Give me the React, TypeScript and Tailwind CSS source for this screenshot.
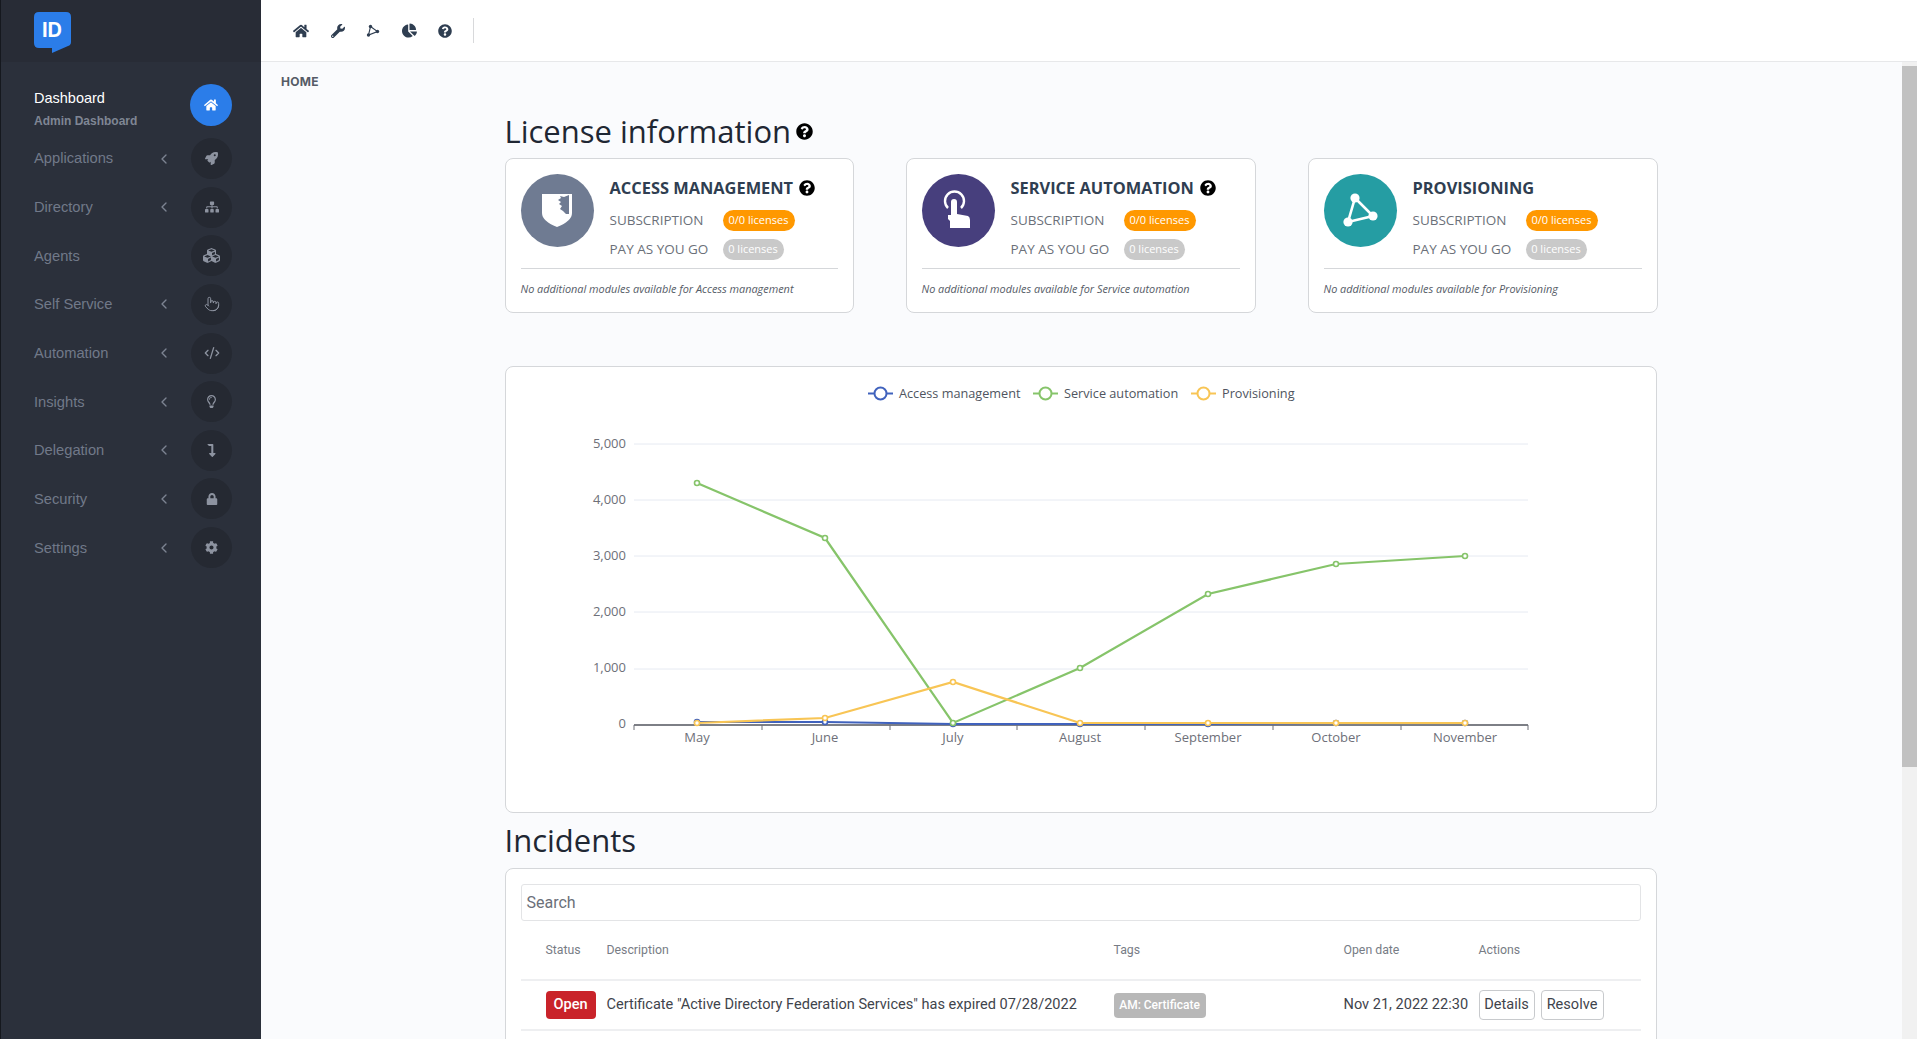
import React from "react";
import {
  FaHome, FaRocket, FaSitemap, FaCubes, FaRegLightbulb,
  FaLevelDownAlt, FaLock, FaCog, FaWrench, FaChartPie, FaQuestionCircle,
} from "react-icons/fa";
import { ChevronLeft, CodeXml, Pointer } from "lucide-react";

const nav: { label: string; icon: React.ReactNode; chevron: boolean }[] = [
  { label: "Applications", icon: <FaRocket className="text-[13px]" />, chevron: true },
  { label: "Directory", icon: <FaSitemap />, chevron: true },
  { label: "Agents", icon: <FaCubes className="text-[17px]" />, chevron: false },
  { label: "Self Service", icon: <Pointer size={16} strokeWidth={1.5} />, chevron: true },
  { label: "Automation", icon: <CodeXml size={16} strokeWidth={2} />, chevron: true },
  { label: "Insights", icon: <FaRegLightbulb className="text-[13px]" />, chevron: true },
  { label: "Delegation", icon: <FaLevelDownAlt className="text-[13px]" />, chevron: true },
  { label: "Security", icon: <FaLock className="text-[12px]" />, chevron: true },
  { label: "Settings", icon: <FaCog className="text-[13px]" />, chevron: true },
];

function ToolbarTriangle() {
  return (
    <svg width="14" height="14" viewBox="0 0 14 14" fill="none">
      <path d="M4.5 2.5 L11.5 7.5 L2.5 11 Z" stroke="#2f3e51" strokeWidth="1.1" />
      <circle cx="4.5" cy="2.5" r="1.7" fill="#2f3e51" />
      <circle cx="11.5" cy="7.5" r="1.7" fill="#2f3e51" />
      <circle cx="2.5" cy="11" r="1.7" fill="#2f3e51" />
    </svg>
  );
}

function ProvisioningIcon() {
  return (
    <svg width="73" height="73" viewBox="0 0 73 73" fill="none">
      <path d="M31 24 L49 42 L24 48 Z" stroke="#fff" strokeWidth="2.6" />
      <circle cx="31" cy="24" r="4.6" fill="#fff" />
      <circle cx="49" cy="42" r="4.6" fill="#fff" />
      <circle cx="24" cy="48" r="4.6" fill="#fff" />
    </svg>
  );
}

function ShieldIcon() {
  return (
    <svg width="73" height="73" viewBox="0 0 73 73">
      <path d="M21 20 H51 V39 Q51 47 36 53 Q21 47 21 39 Z" fill="#fff" />
      <path
        d="M48 21 V40 L45 40 L42 37 L39 35 L41 32 L38 30 L40 28 L37 26 L40 24 L39 22 L43 23 Z"
        fill="#6f7b92"
      />
    </svg>
  );
}

function TapIcon() {
  return (
    <svg width="73" height="73" viewBox="0 0 73 73" fill="none">
      <path d="M26 34 A9.5 9.5 0 1 1 39 34" stroke="#fff" strokeWidth="2.4" />
      <path
        d="M29 28 Q29 25 32 25 Q35 25 35 28 V40 L46 42 Q48 43 48 46 V54 H28 V47 L26 45 V41 L29 41 Z"
        fill="#fff"
      />
    </svg>
  );
}

function LicenseCard({
  title, help, circle, icon,
}: { title: string; help: boolean; circle: string; icon: React.ReactNode }) {
  return (
    <div className="bg-white border border-[#d5d7da] rounded-[8px] h-[155px] px-[15px] pt-[15px]">
      <div className="flex h-[94px]">
        <div className={`w-[73px] h-[73px] rounded-full shrink-0 flex items-center justify-center ${circle}`}>
          {icon}
        </div>
        <div className="ml-[16px] flex-1 pt-[1px]">
          <div className="flex items-center h-[26px] text-[16.4px] font-bold text-[#2f3e51] leading-none">
            {title}
            {help && <FaQuestionCircle className="ml-[6px] text-[16px] text-black" />}
          </div>
          <div className="flex items-center mt-[8px] h-[22px]">
            <span className="w-[113px] text-[13.5px] text-[#6b7079]">SUBSCRIPTION</span>
            <span className="bg-[#ff9800] text-white text-[11px] rounded-full h-[21px] w-[72px] flex items-center justify-center">
              0/0 licenses
            </span>
          </div>
          <div className="flex items-center mt-[7px] h-[22px]">
            <span className="w-[113px] text-[13.5px] text-[#6b7079]">PAY AS YOU GO</span>
            <span className="bg-[#c9c9c9] text-white text-[11px] rounded-full h-[21px] w-[61px] flex items-center justify-center">
              0 licenses
            </span>
          </div>
        </div>
      </div>
      <div className="border-t border-[#d5d7da] pt-[12px] text-[10.9px] italic text-[#555b66] leading-[16px]">
        No additional modules available for {title === "ACCESS MANAGEMENT" ? "Access management" : title === "SERVICE AUTOMATION" ? "Service automation" : "Provisioning"}
      </div>
    </div>
  );
}

const xs = [697, 825, 953, 1080, 1208, 1336, 1465];
const months = ["May", "June", "July", "August", "September", "October", "November"];
const green = [483, 538, 723, 668, 594, 564, 556];
const yellow = [723, 718, 682, 723, 723, 723, 723];
const blue = [722, 722, 724, 724, 724, 723, 723];
const pts = (ys: number[]) => ys.map((y, i) => `${xs[i]},${y}`).join(" ");

function Series({ ys, color }: { ys: number[]; color: string }) {
  return (
    <g>
      <polyline points={pts(ys)} fill="none" stroke={color} strokeWidth="2.2" />
      {ys.map((y, i) => (
        <circle key={i} cx={xs[i]} cy={y} r="2.5" fill="#fff" stroke={color} strokeWidth="1.6" />
      ))}
    </g>
  );
}

function Legend({ x, color, label }: { x: number; color: string; label: string }) {
  return (
    <g>
      <line x1={x} x2={x + 25} y1="393.5" y2="393.5" stroke={color} strokeWidth="2" />
      <circle cx={x + 12.5} cy="393.5" r="6" fill="#fff" stroke={color} strokeWidth="2" />
      <text x={x + 31} y="398" fontSize="12.7" fill="#4f5560">{label}</text>
    </g>
  );
}

function Chart() {
  const lines = [444, 500, 556, 612, 669];
  const labels = ["5,000", "4,000", "3,000", "2,000", "1,000", "0"];
  const ticks = [634, 762, 890, 1017, 1145, 1273, 1401, 1528];
  return (
    <svg width="1150" height="445" viewBox="506 367 1150 445" className="block font-['Open_Sans',sans-serif]">
      <Legend x={868} color="#4062bd" label="Access management" />
      <Legend x={1033} color="#86c46a" label="Service automation" />
      <Legend x={1191} color="#f8c555" label="Provisioning" />
      {lines.map((y) => (
        <line key={y} x1="634" x2="1528" y1={y} y2={y} stroke="#e6eaf2" strokeWidth="1" />
      ))}
      {labels.map((t, i) => (
        <text key={t} x="626" y={[448, 504, 560, 616, 672, 728][i]} textAnchor="end" fontSize="13" fill="#6e7079">{t}</text>
      ))}
      <line x1="634" x2="1528" y1="725" y2="725" stroke="#7d7f86" strokeWidth="1.8" />
      {ticks.map((x) => (
        <line key={x} x1={x} x2={x} y1="725" y2="730" stroke="#6e7079" strokeWidth="1" />
      ))}
      {months.map((m, i) => (
        <text key={m} x={xs[i]} y="742" textAnchor="middle" fontSize="13" fill="#6e7079">{m}</text>
      ))}
      <Series ys={blue} color="#4062bd" />
      <Series ys={green} color="#86c46a" />
      <Series ys={yellow} color="#f8c555" />
    </svg>
  );
}

export default function App() {
  return (
    <div className="flex h-screen w-full overflow-hidden bg-[#fafbfd] font-['Open_Sans',sans-serif]">
      <aside className="w-[261px] shrink-0 bg-[#2b303b] border-l border-[#15181e] font-['Liberation_Sans',sans-serif]">
        <div className="h-[62px] bg-[#282c36] pl-[33px] pt-[12px]">
          <svg width="37" height="42" viewBox="0 0 37 42">
            <path d="M5 0 H32 Q37 0 37 5 V30 Q37 33 34 34 L18 41 V36 H5 Q0 36 0 31 V5 Q0 0 5 0 Z" fill="#2b7de9" />
            <text x="18" y="25" textAnchor="middle" fontSize="20" fontWeight="700" fill="#fff" fontFamily="Inter, sans-serif">ID</text>
          </svg>
        </div>
        <div className="pt-[22px]">
          <div className="flex items-center h-[42px] pl-[33px] pr-[29px] justify-between">
            <div className="mt-[7px]">
              <div className="text-[14.5px] text-white leading-[20px]">Dashboard</div>
              <div className="text-[12px] font-bold text-[#7f8694] leading-[15px] mt-[6.5px]">Admin Dashboard</div>
            </div>
            <div className="w-[42px] h-[42px] rounded-full bg-[#2b7de9] flex items-center justify-center text-white text-[14px]">
              <FaHome />
            </div>
          </div>
          <div className="mt-[12px] flex flex-col gap-[7.65px]">
            {nav.map((n) => (
              <div key={n.label} className="flex items-center h-[41px] pl-[33px] pr-[29px] text-[14.7px] text-[#717989]">
                <span className="flex-1">{n.label}</span>
                {n.chevron && <ChevronLeft size={16} strokeWidth={2} className="text-[#7d8492] mr-[19px]" />}
                <div className="w-[41px] h-[41px] rounded-full bg-[#252932] flex items-center justify-center text-[#8d93a0] text-[14px]">
                  {n.icon}
                </div>
              </div>
            ))}
          </div>
        </div>
      </aside>
      <div className="flex-1 flex flex-col min-w-0">
        <header className="h-[62px] shrink-0 bg-white border-b border-[#e7e8ea] flex items-center pl-[32px] text-[#2f3e51] text-[15px]">
          <FaHome className="text-[16px]" />
          <FaWrench className="ml-[22px] text-[14px]" />
          <span className="ml-[21px]"><ToolbarTriangle /></span>
          <FaChartPie className="ml-[22px]" />
          <FaQuestionCircle className="ml-[21px] text-[14px]" />
          <div className="ml-[21px] w-px h-[25px] bg-[#d8d9db]" />
        </header>
        <div className="flex-1 flex min-h-0">
          <main className="flex-1 overflow-hidden min-w-0 pr-[2px]">
            <div className="pl-[20px] pt-[13px] text-[12px] font-bold text-[#555b66] leading-[14px] tracking-[0.25px] font-['Inter',sans-serif]">HOME</div>
            <div className="w-[1152px] mx-auto">
              <div className="flex items-center h-[44px] mt-[20px]">
                <h1 className="text-[31px] leading-none text-[#1f2733]">License information</h1>
                <FaQuestionCircle className="ml-[5px] mt-[1px] text-[17px] text-black" />
              </div>
              <div className="grid grid-cols-[349px_350px_350px] gap-x-[52px] mt-[5px]">
                <LicenseCard title="ACCESS MANAGEMENT" help circle="bg-[#6f7b92]" icon={<ShieldIcon />} />
                <LicenseCard title="SERVICE AUTOMATION" help circle="bg-[#473f7d]" icon={<TapIcon />} />
                <LicenseCard title="PROVISIONING" help={false} circle="bg-[#259da3]" icon={<ProvisioningIcon />} />
              </div>
              <div className="mt-[53px] h-[447px] bg-white border border-[#d5d7da] rounded-[8px]">
                <Chart />
              </div>
              <h2 className="text-[31px] leading-[44px] mt-[5px] text-[#1f2733]">Incidents</h2>
              <div className="mt-[6px] bg-white border border-[#d5d7da] rounded-[8px] px-[15px] pt-[15px] pb-4 font-['Roboto',sans-serif]">
                <div className="h-[37px] border border-[#e3e4e6] rounded-[3px] flex items-center px-[5px] text-[16px] text-[#6b7079]">
                  Search
                </div>
                <div className="h-[60px] flex items-center border-b-2 border-[#eeeff1] pl-[25px] text-[12.3px] text-[#777c85]">
                  <div className="w-[61px]">Status</div>
                  <div className="w-[507px]">Description</div>
                  <div className="w-[230px]">Tags</div>
                  <div className="w-[135px]">Open date</div>
                  <div>Actions</div>
                </div>
                <div className="h-[50px] flex items-center border-b-2 border-[#eeeff1] pl-[25px] text-[14.55px] text-[#3f444c]">
                  <div className="w-[61px]">
                    <span className="w-[50px] h-[28px] rounded-[4px] bg-[#c9232a] text-white font-medium flex items-center justify-center">Open</span>
                  </div>
                  <div className="w-[507px]">Certificate "Active Directory Federation Services" has expired 07/28/2022</div>
                  <div className="w-[230px]">
                    <span className="w-[92px] h-[25px] rounded-[4px] bg-[#b8b8b8] text-white text-[12px] font-medium flex items-center justify-center">AM: Certificate</span>
                  </div>
                  <div className="w-[135px]">Nov 21, 2022 22:30</div>
                  <div className="flex gap-[6px]">
                    <span className="w-[56px] h-[30px] border border-[#c8cacd] rounded-[4px] flex items-center justify-center">Details</span>
                    <span className="w-[63px] h-[30px] border border-[#c8cacd] rounded-[4px] flex items-center justify-center">Resolve</span>
                  </div>
                </div>
              </div>
            </div>
          </main>
          <div className="w-[15px] shrink-0 bg-[#f1f1f1] pt-[4px]">
            <div className="h-[701px] bg-[#c1c1c1]" />
          </div>
        </div>
      </div>
    </div>
  );
}
